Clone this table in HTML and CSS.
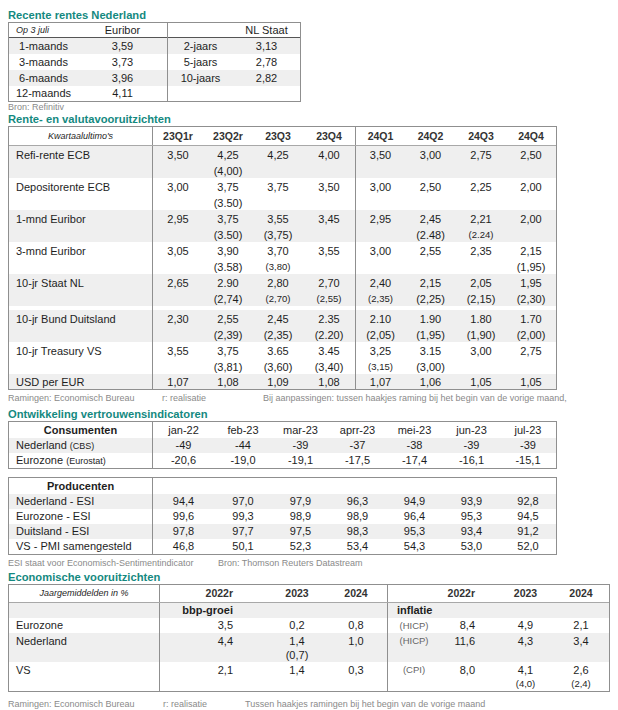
FILE: index.html
```html
<!DOCTYPE html>
<html lang="nl">
<head>
<meta charset="utf-8">
<title>Rente-overzicht</title>
<link rel="stylesheet" href="styles.css">
</head>
<body>
<div class="page">

  <h2 class="title">Recente rentes Nederland</h2>
  <div class="tbl t1">
    <div class="row head">
      <div class="c lab it">Op 3 juli</div><div class="c">Euribor</div><div class="c sep"></div><div class="c">NL Staat</div>
    </div>
    <div class="row gray"><div class="c">1-maands</div><div class="c">3,59</div><div class="c sep">2-jaars</div><div class="c">3,13</div></div>
    <div class="row"><div class="c">3-maands</div><div class="c">3,73</div><div class="c sep">5-jaars</div><div class="c">2,78</div></div>
    <div class="row gray"><div class="c">6-maands</div><div class="c">3,96</div><div class="c sep">10-jaars</div><div class="c">2,82</div></div>
    <div class="row last"><div class="c">12-maands</div><div class="c">4,11</div><div class="c sep"></div><div class="c"></div></div>
  </div>
  <div class="note n1"><span>Bron: Refinitiv</span></div>

  <h2 class="title">Rente- en valutavooruitzichten</h2>
  <div class="tbl t2">
    <div class="row head">
      <div class="c it">Kwartaalultimo's</div>
      <div class="c sep hd">23Q1r</div><div class="c hd">23Q2r</div><div class="c hd">23Q3</div><div class="c hd">23Q4</div>
      <div class="c sep hd">24Q1</div><div class="c hd">24Q2</div><div class="c hd">24Q3</div><div class="c hd">24Q4</div>
    </div>
    <div class="row gray">
      <div class="c lab">Refi-rente ECB</div>
      <div class="c sep">3,50</div><div class="c">4,25<span class="sub">(4,00)</span></div><div class="c">4,25</div><div class="c">4,00</div>
      <div class="c sep">3,50</div><div class="c">3,00</div><div class="c">2,75</div><div class="c">2,50</div>
    </div>
    <div class="row">
      <div class="c lab">Depositorente ECB</div>
      <div class="c sep">3,00</div><div class="c">3,75<span class="sub">(3.50)</span></div><div class="c">3,75</div><div class="c">3,50</div>
      <div class="c sep">3,00</div><div class="c">2,50</div><div class="c">2,25</div><div class="c">2,00</div>
    </div>
    <div class="row gray">
      <div class="c lab">1-mnd Euribor</div>
      <div class="c sep">2,95</div><div class="c">3,75<span class="sub">(3.50)</span></div><div class="c">3,55<span class="sub">(3,75)</span></div><div class="c">3,45</div>
      <div class="c sep">2,95</div><div class="c">2,45<span class="sub">(2.48)</span></div><div class="c">2,21<span class="sub sm">(2.24)</span></div><div class="c">2,00</div>
    </div>
    <div class="row">
      <div class="c lab">3-mnd Euribor</div>
      <div class="c sep">3,05</div><div class="c">3,90<span class="sub">(3.58)</span></div><div class="c">3,70<span class="sub sm">(3,80)</span></div><div class="c">3,55</div>
      <div class="c sep">3,00</div><div class="c">2,55</div><div class="c">2,35</div><div class="c">2,15<span class="sub">(1,95)</span></div>
    </div>
    <div class="row gray">
      <div class="c lab">10-jr Staat NL</div>
      <div class="c sep">2,65</div><div class="c">2.90<span class="sub">(2,74)</span></div><div class="c">2,80<span class="sub sm">(2,70)</span></div><div class="c">2,70<span class="sub sm">(2,55)</span></div>
      <div class="c sep">2,40<span class="sub sm">(2,35)</span></div><div class="c">2,15<span class="sub">(2,25)</span></div><div class="c">2,05<span class="sub">(2,15)</span></div><div class="c">1,95<span class="sub">(2,30)</span></div>
    </div>
    <div class="row gap">
      <div class="c lab">10-jr Bund Duitsland</div>
      <div class="c sep">2,30</div><div class="c">2,55<span class="sub">(2,39)</span></div><div class="c">2,45<span class="sub">(2,35)</span></div><div class="c">2.35<span class="sub">(2.20)</span></div>
      <div class="c sep">2.10<span class="sub">(2,05)</span></div><div class="c">1.90<span class="sub">(1,95)</span></div><div class="c">1.80<span class="sub">(1,90)</span></div><div class="c">1.70<span class="sub">(2,00)</span></div>
    </div>
    <div class="row">
      <div class="c lab">10-jr Treasury VS</div>
      <div class="c sep">3,55</div><div class="c">3,75<span class="sub">(3,81)</span></div><div class="c">3.65<span class="sub">(3,60)</span></div><div class="c">3.45<span class="sub">(3,40)</span></div>
      <div class="c sep">3,25<span class="sub sm">(3,15)</span></div><div class="c">3.15<span class="sub">(3,00)</span></div><div class="c">3,00</div><div class="c">2,75</div>
    </div>
    <div class="row gray single">
      <div class="c lab">USD per EUR</div>
      <div class="c sep">1,07</div><div class="c">1,08</div><div class="c">1,09</div><div class="c">1,08</div>
      <div class="c sep">1,07</div><div class="c">1,06</div><div class="c">1,05</div><div class="c">1,05</div>
    </div>
  </div>
  <div class="note n2"><span>Ramingen: Economisch Bureau</span><span>r: realisatie</span><span>Bij aanpassingen: tussen haakjes raming bij het begin van de vorige maand,</span></div>

  <h2 class="title">Ontwikkeling vertrouwensindicatoren</h2>
  <div class="tbl t3">
    <div class="row head">
      <div class="c b">Consumenten</div>
      <div class="c sep">jan-22</div><div class="c">feb-23</div><div class="c">mar-23</div><div class="c">aprr-23</div><div class="c">mei-23</div><div class="c">jun-23</div><div class="c">jul-23</div>
    </div>
    <div class="row gray">
      <div class="c lab">Nederland <small>(CBS)</small></div>
      <div class="c sep">-49</div><div class="c">-44</div><div class="c">-39</div><div class="c">-37</div><div class="c">-38</div><div class="c">-39</div><div class="c">-39</div>
    </div>
    <div class="row">
      <div class="c lab">Eurozone <small>(Eurostat)</small></div>
      <div class="c sep">-20,6</div><div class="c">-19,0</div><div class="c">-19,1</div><div class="c">-17,5</div><div class="c">-17,4</div><div class="c">-16,1</div><div class="c">-15,1</div>
    </div>
  </div>
  <div class="tbl t3 t3b">
    <div class="row head">
      <div class="c b">Producenten</div>
      <div class="c sep"></div><div class="c"></div><div class="c"></div><div class="c"></div><div class="c"></div><div class="c"></div><div class="c"></div>
    </div>
    <div class="row gray">
      <div class="c lab">Nederland - ESI</div>
      <div class="c sep">94,4</div><div class="c">97,0</div><div class="c">97,9</div><div class="c">96,3</div><div class="c">94,9</div><div class="c">93,9</div><div class="c">92,8</div>
    </div>
    <div class="row">
      <div class="c lab">Eurozone - ESI</div>
      <div class="c sep">99,6</div><div class="c">99,3</div><div class="c">98,9</div><div class="c">98,9</div><div class="c">96,4</div><div class="c">95,3</div><div class="c">94,5</div>
    </div>
    <div class="row gray">
      <div class="c lab">Duitsland - ESI</div>
      <div class="c sep">97,8</div><div class="c">97,7</div><div class="c">97,5</div><div class="c">98,3</div><div class="c">95,3</div><div class="c">93,4</div><div class="c">91,2</div>
    </div>
    <div class="row">
      <div class="c lab">VS - PMI samengesteld</div>
      <div class="c sep">46,8</div><div class="c">50,1</div><div class="c">52,3</div><div class="c">53,4</div><div class="c">54,3</div><div class="c">53,0</div><div class="c">52,0</div>
    </div>
  </div>
  <div class="note n3"><span>ESI staat voor Economisch-Sentimentindicator</span><span>Bron: Thomson Reuters Datastream</span></div>

  <h2 class="title">Economische vooruitzichten</h2>
  <div class="tbl t4">
    <div class="row head">
      <div class="c it">Jaargemiddelden in %</div>
      <div class="c sep k1 hd">2022r</div><div class="c k2 hd">2023</div><div class="c k3 hd">2024</div>
      <div class="c sep"></div><div class="c k5 hd">2022r</div><div class="c hd">2023</div><div class="c k7 hd">2024</div>
    </div>
    <div class="row gray">
      <div class="c"></div>
      <div class="c sep k1 b">bbp-groei</div><div class="c"></div><div class="c"></div>
      <div class="c sep infl b">inflatie</div><div class="c"></div><div class="c"></div><div class="c"></div>
    </div>
    <div class="row">
      <div class="c lab">Eurozone</div>
      <div class="c sep k1">3,5</div><div class="c k2">0,2</div><div class="c k3">0,8</div>
      <div class="c sep idx">(HICP)</div><div class="c k5">8,4</div><div class="c">4,9</div><div class="c k7">2,1</div>
    </div>
    <div class="row gray two">
      <div class="c lab">Nederland</div>
      <div class="c sep k1">4,4</div><div class="c k2">1,4<span class="sub">(0,7)</span></div><div class="c k3">1,0</div>
      <div class="c sep idx">(HICP)</div><div class="c k5">11,6</div><div class="c">4,3</div><div class="c k7">3,4</div>
    </div>
    <div class="row two">
      <div class="c lab">VS</div>
      <div class="c sep k1">2,1</div><div class="c k2">1,4</div><div class="c k3">0,3</div>
      <div class="c sep idx">(CPI)</div><div class="c k5">8,0</div><div class="c">4,1<span class="sub sm">(4,0)</span></div><div class="c k7">2,6<span class="sub sm">(2,4)</span></div>
    </div>
  </div>
  <div class="note n4"><span>Ramingen: Economisch Bureau</span><span>r: realisatie</span><span>Tussen haakjes ramingen bij het begin van de vorige maand</span></div>

</div>
</body>
</html>
```

FILE: styles.css
```css
* { box-sizing: border-box; }

html, body {
  margin: 0;
  padding: 0;
  background: #ffffff;
}

body {
  font-family: "Liberation Sans", Arial, sans-serif;
  font-size: 11px;
  color: #1e1e1e;
}

.page {
  padding: 8px 0 0 8px;
}

.title {
  margin: 0;
  height: 14px;
  line-height: 14px;
  font-size: 11.2px;
  font-weight: bold;
  color: #14897f;
  white-space: nowrap;
}

.tbl {
  border: 1px solid #8f8f8f;
}

.row {
  display: grid;
}

.gray {
  background: #efefef;
}

.c {
  text-align: center;
  white-space: nowrap;
}

.sep {
  border-left: 1px solid #8f8f8f;
}

.lab {
  text-align: left;
  padding-left: 7px;
}

.it {
  font-style: italic;
  font-size: 9px;
}

.b {
  font-weight: bold;
}

.hd {
  font-weight: bold;
  font-size: 10.5px;
  color: #333333;
}

.sub {
  display: block;
}

.sm {
  font-size: 9.5px;
}

small {
  font-size: 9px;
}

/* ---------- table 1 ---------- */
.t1 {
  width: 293px;
}

.t1 .row {
  grid-template-columns: 69px 89px 66px 67px;
  height: 16px;
  line-height: 16px;
}

.t1 .head {
  height: 15px;
  line-height: 15px;
  border-bottom: 1px solid #555555;
}

.t1 .head .lab {
  padding-left: 7px;
}

.t1 .last {
  height: 15px;
  line-height: 15px;
}

/* ---------- table 2 ---------- */
.t2 {
  width: 549px;
}

.t2 .row {
  grid-template-columns: 143px 51px 50px 50px 52px 50px 51px 50px 50px;
  height: 32px;
  line-height: 16px;
}

.t2 .row .c {
  padding-top: 1px;
}

.t2 .head {
  height: 19px;
  line-height: 18px;
  border-bottom: 1px solid #a8a8a8;
}

.t2 .head .c {
  padding-top: 0;
}

.t2 .gap {
  height: 36px;
  background: linear-gradient(#ffffff 0 4px, #efefef 4px);
}

.t2 .gap .c {
  padding-top: 5px;
}

.t2 .single {
  height: 15px;
  line-height: 15px;
}

/* ---------- table 3 ---------- */
.t3 {
  width: 549px;
}

.t3 .row {
  grid-template-columns: 143px 62px 58px 57px 57px 57px 57px 56px;
  height: 15px;
  line-height: 15px;
}

.t3 .head {
  height: 16px;
  line-height: 16px;
}

.t3b {
  margin-top: 8px;
}

/* ---------- table 4 ---------- */
.t4 {
  width: 602px;
}

.t4 .row {
  grid-template-columns: 150px 81px 90px 57px 53px 51px 69px 49px;
  height: 15px;
  line-height: 15px;
}

.t4 .head {
  height: 18px;
  line-height: 17px;
  border-bottom: 1px solid #a8a8a8;
}

.t4 .two {
  height: 29px;
  line-height: 14px;
}

.t4 .two .c {
  padding-top: 1px;
}

.t4 .k1 {
  text-align: right;
  padding-right: 7px;
}

.t4 .k2 {
  padding-left: 24px;
}

.t4 .k3 {
  padding-right: 5px;
}

.t4 .k5 {
  text-align: right;
  padding-right: 16px;
}

.t4 .k7 {
  padding-right: 7px;
}

.t4 .infl {
  text-align: left;
  padding-left: 9px;
}

.t4 .idx {
  font-size: 9.5px;
  color: #666666;
}

/* ---------- notes ---------- */
.note {
  display: grid;
  height: 11px;
  line-height: 11px;
  font-family: "Liberation Sans Narrow", "Liberation Sans", Arial, sans-serif;
  font-size: 9px;
  color: #8a8a8a;
  white-space: nowrap;
}

.n1 {
  height: 10px;
  line-height: 10px;
}

.n2 {
  grid-template-columns: 154px 101px auto;
  margin: 3px 0 3px;
}

.n3 {
  grid-template-columns: 210px auto;
  margin: 3px 0 1px;
}

.n4 {
  grid-template-columns: 155px 82px auto;
  margin-top: 7px;
}
```
